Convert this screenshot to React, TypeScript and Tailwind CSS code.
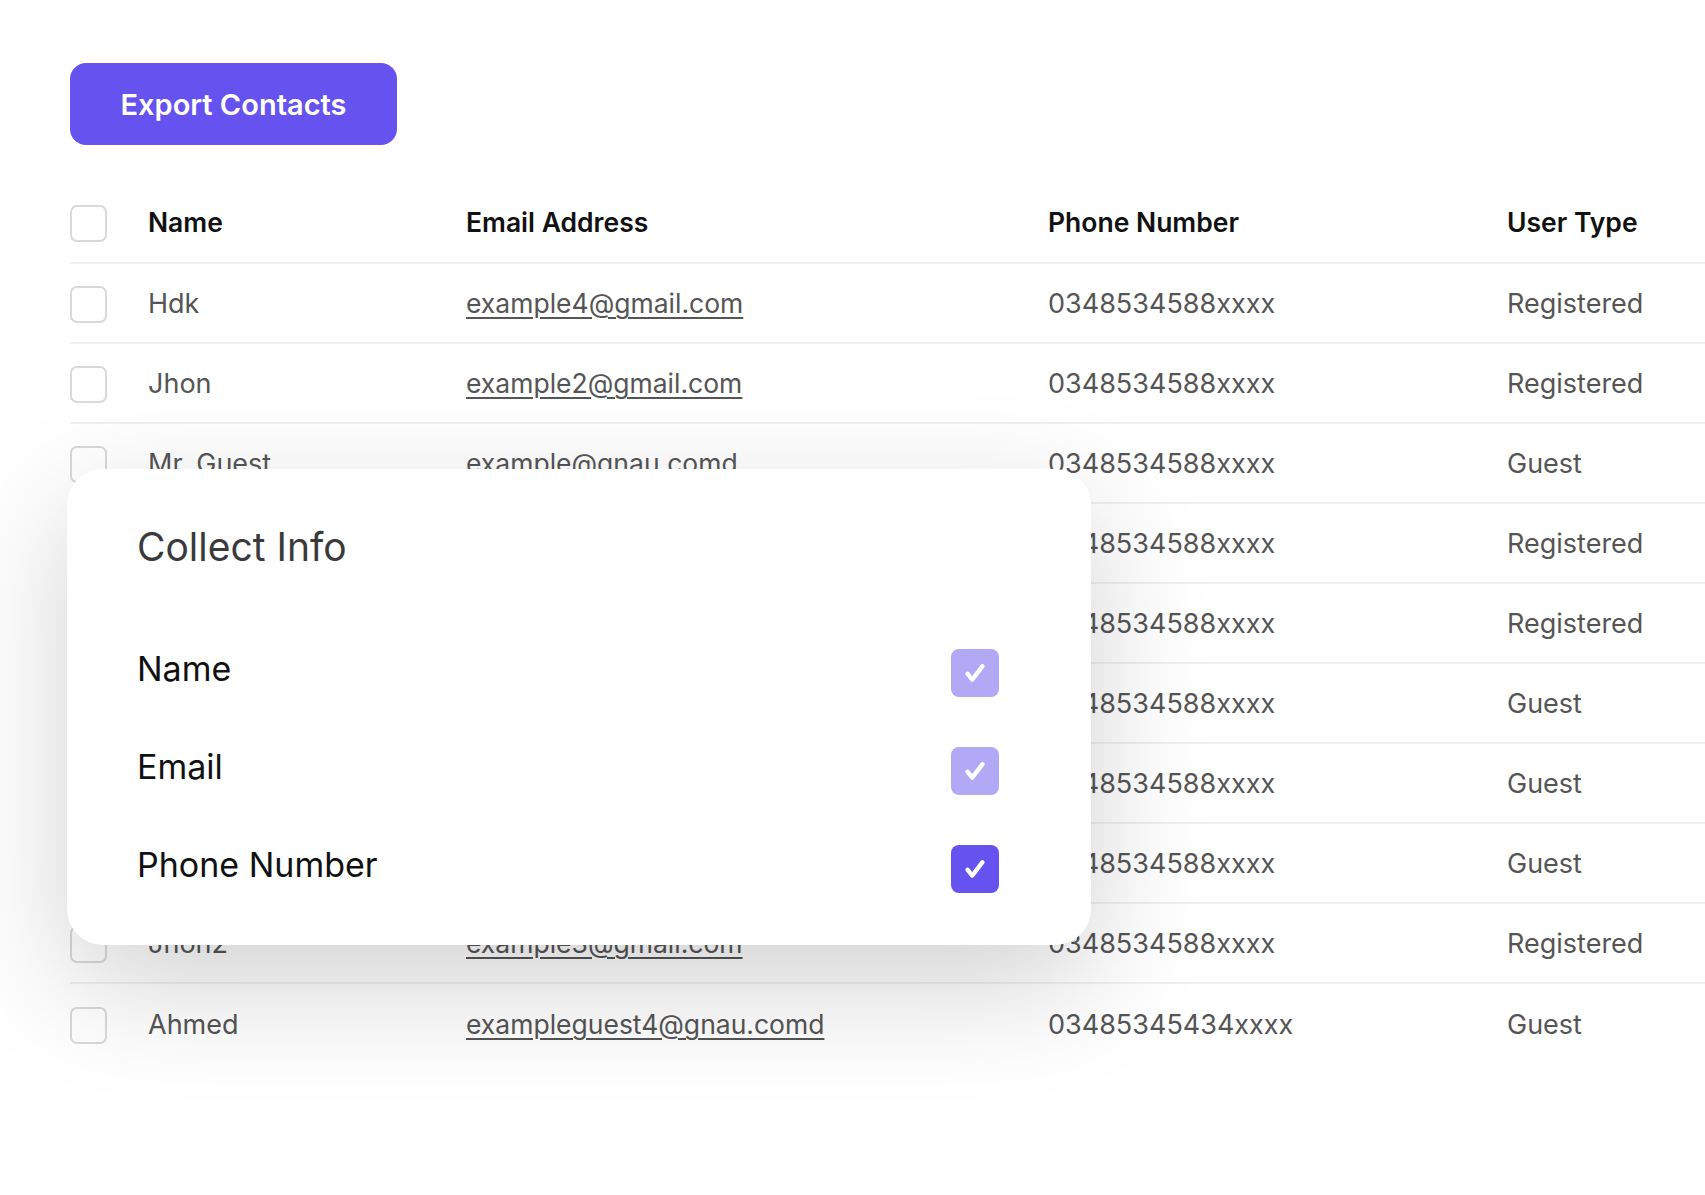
import React from 'react';

type UserType = 'Registered' | 'Guest';

interface Contact {
  name: string;
  email: string;
  phone: string;
  type: UserType;
}

const contacts: Contact[] = [
  { name: 'Hdk', email: 'example4@gmail.com', phone: '0348534588xxxx', type: 'Registered' },
  { name: 'Jhon', email: 'example2@gmail.com', phone: '0348534588xxxx', type: 'Registered' },
  { name: 'Mr. Guest', email: 'example@gnau.comd', phone: '0348534588xxxx', type: 'Guest' },
  { name: 'Sara', email: 'example5@gmail.com', phone: '0348534588xxxx', type: 'Registered' },
  { name: 'Ali', email: 'example6@gmail.com', phone: '0348534588xxxx', type: 'Registered' },
  { name: 'Guest 2', email: 'example7@gnau.comd', phone: '0348534588xxxx', type: 'Guest' },
  { name: 'Guest 3', email: 'example8@gnau.comd', phone: '0348534588xxxx', type: 'Guest' },
  { name: 'Guest 4', email: 'example9@gnau.comd', phone: '0348534588xxxx', type: 'Guest' },
  { name: 'Jhon2', email: 'example3@gmail.com', phone: '0348534588xxxx', type: 'Registered' },
  { name: 'Ahmed', email: 'exampleguest4@gnau.comd', phone: '03485345434xxxx', type: 'Guest' },
];

const cols = 'grid grid-cols-[78px_318px_582px_459px_1fr] items-center';

const EmptyBox = () => (
  <span className="block w-[37px] h-[37px] rounded-[7px] border-2 border-[#d9d9d9] bg-white" />
);

const CheckBox = ({ faded }: { faded?: boolean }) => (
  <span
    className={`flex items-center justify-center w-[48px] h-[48px] rounded-[8px] ${
      faded ? 'bg-[#b2a9f6]' : 'bg-[#6552ef]'
    }`}
  >
    <svg width="30" height="30" viewBox="0 0 24 24" fill="none">
      <path d="M6 12.5l3.8 4.8L18 6.5" stroke="white" strokeWidth="3.4" strokeLinecap="round" strokeLinejoin="round" />
    </svg>
  </span>
);

const CollectInfo = () => (
  <div className="absolute left-[67px] top-[469px] w-[1024px] h-[476px] bg-white rounded-[36px] shadow-[0_40px_120px_rgba(0,0,0,0.18)] pl-[70px] pr-[92px] pt-[52px]">
    <h2 className="text-[39px] leading-[52px] text-[#3a3a3a] font-normal">Collect Info</h2>
    <div className="mt-[76px] flex flex-col gap-[50px]">
      {[
        { label: 'Name', faded: true },
        { label: 'Email', faded: true },
        { label: 'Phone Number', faded: false },
      ].map((o) => (
        <div key={o.label} className="flex items-center justify-between h-[48px]">
          <span className="text-[34px] leading-[40px] text-[#111] pb-[8px]">{o.label}</span>
          <CheckBox faded={o.faded} />
        </div>
      ))}
    </div>
  </div>
);

export default function App() {
  return (
    <div
      className="relative w-full h-[1195px] overflow-hidden bg-white pl-[70px] pt-[63px]"
      style={{ fontFamily: 'Inter, "Noto Sans", sans-serif' }}
    >
      <button className="w-[327px] h-[82px] rounded-[16px] bg-[#6552ef] text-white text-[29px] font-semibold pt-[2px]">
        Export Contacts
      </button>

      <div className="mt-[39px]">
        <div className={`${cols} h-[80px] border-b-2 border-[#f0f0f0] text-[26.5px] font-semibold text-[#111]`}>
          <EmptyBox />
          <span>Name</span>
          <span>Email Address</span>
          <span>Phone Number</span>
          <span>User Type</span>
        </div>
        {contacts.map((c, i) => (
          <div
            key={c.name}
            className={`${cols} h-[80px] text-[27px] text-[#555] pt-[2px] ${
              i < contacts.length - 1 ? 'border-b-2 border-[#f0f0f0]' : ''
            }`}
          >
            <EmptyBox />
            <span>{c.name}</span>
            <span className="underline underline-offset-[4px] decoration-[1.5px] text-[26.5px]">{c.email}</span>
            <span>{c.phone}</span>
            <span>{c.type}</span>
          </div>
        ))}
      </div>

      <CollectInfo />
    </div>
  );
}
